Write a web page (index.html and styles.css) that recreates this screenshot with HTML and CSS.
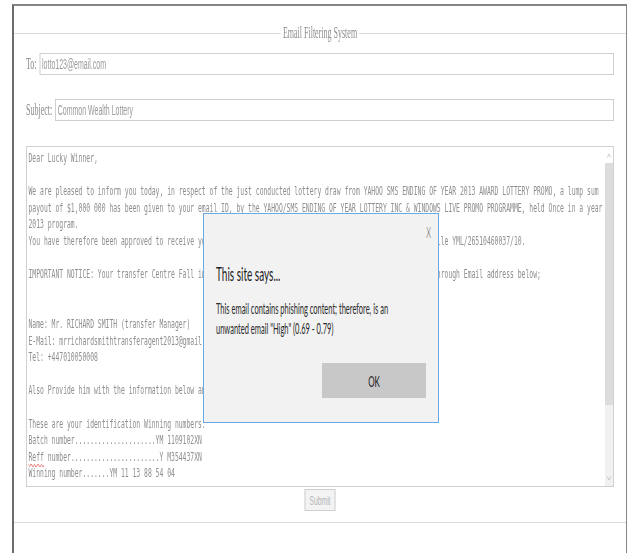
FILE: index.html
```html
<!DOCTYPE html>
<html lang="en">
<head>
<meta charset="utf-8">
<title>Email Filtering System</title>
<link rel="stylesheet" href="styles.css">
</head>
<body>
<div class="page">
  <div class="frame">
    <form class="mail-form">
      <fieldset class="panel">
        <legend class="panel-title">Email Filtering System</legend>

        <div class="row">
          <span class="label">To:</span>
          <div class="field">lotto123@email.com</div>
        </div>

        <div class="row">
          <span class="label">Subject:</span>
          <div class="field">Common Wealth Lottery</div>
        </div>

        <div class="message">
<pre class="message-text">Dear Lucky Winner,

We are pleased to inform you today, in respect of the just conducted lottery draw from YAHOO SMS ENDING OF YEAR 2013 AWARD LOTTERY PROMO, a lump sum
payout of $1,000 000 has been given to your email ID, by the YAHOO/SMS ENDING OF YEAR LOTTERY INC &amp; WINDOWS LIVE PROMO PROGRAMME, held Once in a year
2013 program.
You have therefore been approved to receive your winning payment of $1,000 000.00 USD under the security file YML/26510460037/10.

IMPORTANT NOTICE: Your transfer Centre Fall in Europe, kindly contact our foreign transfer manager today through Email address below;


Name: Mr. RICHARD SMITH (transfer Manager)
E-Mail: mrrichardsmithtransferagent2013@gmail.com
Tel: +447010050008

Also Provide him with the information below and your winning numbers:

These are your identification Winning numbers:
Batch number.....................YM 1109102XN
<span class="misspelt">Reff</span> number.......................Y M354437XN
Winning number.......YM 11 13 88 54 04</pre>
          <div class="scrollbar">
            <div class="scroll-arrow scroll-arrow-top">
              <svg width="8" height="5" viewBox="0 0 8 5"><path d="M0.5 4.5 L4 1 L7.5 4.5" fill="none" stroke="#bdbdbd" stroke-width="1"/></svg>
            </div>
            <div class="scroll-thumb"></div>
            <div class="scroll-track"></div>
            <div class="scroll-arrow">
              <svg width="8" height="5" viewBox="0 0 8 5"><path d="M0.5 0.5 L4 4 L7.5 0.5" fill="none" stroke="#bdbdbd" stroke-width="1"/></svg>
            </div>
          </div>
        </div>

        <div class="actions">
          <button type="button" class="submit">Submit</button>
        </div>
      </fieldset>
    </form>
  </div>

  <div class="alert" role="alertdialog">
    <div class="alert-head"><span class="alert-close">X</span></div>
    <h2 class="alert-title">This site says...</h2>
    <p class="alert-text">This email contains phishing content; therefore, is an unwanted email "High" (0.69 - 0.79)</p>
    <div class="alert-actions">
      <button type="button" class="alert-ok">OK</button>
    </div>
  </div>
</div>
</body>
</html>
```
FILE: styles.css
```css
html,
body {
  margin: 0;
  overflow: hidden;
  background: #fff;
}

/* the layout is built twice as wide and squeezed horizontally */
.page {
  position: relative;
  box-sizing: border-box;
  width: 1256px;
  height: 553px;
  padding: 4px 0 0 24px;
  transform: scaleX(0.5);
  transform-origin: 0 0;
}

.frame {
  box-sizing: border-box;
  width: 1230px;
  height: 549px;
  border: 2px solid #858585;
  border-left: 4px solid #6c6c6c;
  border-bottom: none;
}

.mail-form {
  margin: 0;
}

.panel {
  min-width: 0;
  margin: 18px 0 0;
  padding: 11px 24px 11px 24px;
  border: none;
  border-top: 1px solid #dcdcdc;
  border-bottom: 1px solid #dcdcdc;
}

.panel-title {
  margin: 0 auto;
  padding: 0 4px;
  font: 16px/18px "Liberation Serif", serif;
  color: #8d8d8d;
}

.row {
  display: flex;
  align-items: center;
  gap: 6px;
  height: 22px;
}

.row + .row {
  margin-top: 24px;
}

.label {
  font: 16px/20px "Liberation Serif", serif;
  color: #8a8a8a;
}

.field {
  flex: 1;
  box-sizing: border-box;
  height: 22px;
  padding: 0 3px;
  border: 1px solid #cfcfcf;
  border-left-width: 2px;
  border-right-width: 2px;
  font: 14px/20px "Liberation Sans", sans-serif;
  color: #9a9a9a;
}

.message {
  display: flex;
  box-sizing: border-box;
  height: 341px;
  margin-top: 25px;
  border: 1px solid #d0d0d0;
  border-left-width: 2px;
  border-right-width: 2px;
}

.message-text {
  flex: 1;
  margin: 0;
  padding: 3px 3px;
  overflow: hidden;
  white-space: pre;
  font: 12.8px/16.6px "DejaVu Sans Mono", monospace;
  color: #8e8e8e;
}

.misspelt {
  text-decoration: underline wavy #e0453a;
  text-decoration-thickness: 1px;
  text-underline-offset: 2px;
}

.scrollbar {
  display: flex;
  flex-direction: column;
  width: 16px;
  background: #f1f1f1;
}

.scroll-arrow {
  display: flex;
  align-items: center;
  justify-content: center;
  height: 16px;
}

.scroll-arrow-top {
  background: #fff;
}

.scroll-thumb {
  height: 242px;
  background: #dcdcdc;
}

.scroll-track {
  flex: 1;
}

.actions {
  display: flex;
  justify-content: center;
  margin-top: 2px;
}

.submit {
  box-sizing: border-box;
  height: 22px;
  padding: 0 8px;
  border: 1px solid #cfcfcf;
  border-left-width: 2px;
  border-right-width: 2px;
  border-radius: 0;
  background: #f3f3f3;
  font: 13.5px "Liberation Sans", sans-serif;
  color: #b4b4b4;
}

/* browser alert box */
.alert {
  position: absolute;
  left: 406px;
  top: 213px;
  box-sizing: border-box;
  width: 472px;
  padding: 0 24px 24px;
  background: #f2f2f2;
  border: 1px solid #6aa8e6;
  border-left-width: 2px;
  border-right-width: 2px;
  font-family: Lato, "Open Sans", sans-serif;
}

.alert-head {
  display: flex;
  align-items: center;
  justify-content: flex-end;
  height: 36px;
  margin-right: -10px;
}

.alert-close {
  font-size: 15px;
  font-weight: 300;
  color: #444;
}

.alert-title {
  margin: 10px 0 0;
  font-size: 20px;
  line-height: 26px;
  font-weight: 400;
  color: #1e1e1e;
}

.alert-text {
  max-width: 372px;
  margin: 12px 0 0;
  font-size: 15px;
  line-height: 20px;
  color: #2a2a2a;
}

.alert-actions {
  display: flex;
  justify-content: flex-end;
  margin-top: 25px;
}

.alert-ok {
  width: 208px;
  height: 35px;
  border: none;
  border-radius: 0;
  background: #c8c8c8;
  font: 16px Lato, "Open Sans", sans-serif;
  color: #222;
}
```
